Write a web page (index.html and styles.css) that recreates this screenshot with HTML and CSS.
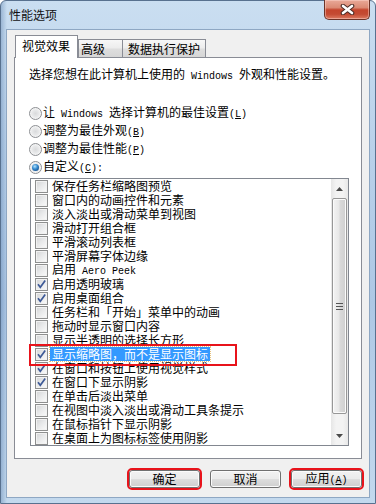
FILE: index.html
```html
<!DOCTYPE html>
<html lang="zh-CN">
<head>
<meta charset="utf-8">
<title>性能选项</title>
<link rel="stylesheet" href="styles.css">
</head>
<body>
<div class="window">
  <div class="titlebar">
    <span class="title">性能选项</span>
    <div class="close">
      <svg width="15" height="11" viewBox="0 0 15 11"><path d="M3 2 L12 9 M12 2 L3 9" stroke="#4b2b25" stroke-width="4.6" stroke-linecap="round"/><path d="M3 2 L12 9 M12 2 L3 9" stroke="#fff" stroke-width="2.6" stroke-linecap="round"/></svg>
    </div>
  </div>
  <div class="client">
    <div class="tabs">
      <div class="tab active">视觉效果</div>
      <div class="tab t-adv">高级</div>
      <div class="tab t-dep">数据执行保护</div>
    </div>
    <div class="panel">
      <p class="intro">选择您想在此计算机上使用的<span class="en"> Windows </span>外观和性能设置。</p>
      <div class="radios">
        <div class="radio-row"><span class="radio"></span><span class="lbl">让<span class="en"> Windows </span>选择计算机的最佳设置<span class="en">(<u>L</u>)</span></span></div>
        <div class="radio-row"><span class="radio"></span><span class="lbl">调整为最佳外观<span class="en">(<u>B</u>)</span></span></div>
        <div class="radio-row"><span class="radio"></span><span class="lbl">调整为最佳性能<span class="en">(<u>P</u>)</span></span></div>
        <div class="radio-row"><span class="radio on"></span><span class="lbl">自定义<span class="en">(<u>C</u>):</span></span></div>
      </div>
      <div class="listbox">
        <ul class="items">
          <li><span class="cb"></span><span class="lbl">保存任务栏缩略图预览</span></li>
          <li><span class="cb"></span><span class="lbl">窗口内的动画控件和元素</span></li>
          <li><span class="cb"></span><span class="lbl">淡入淡出或滑动菜单到视图</span></li>
          <li><span class="cb"></span><span class="lbl">滑动打开组合框</span></li>
          <li><span class="cb"></span><span class="lbl">平滑滚动列表框</span></li>
          <li><span class="cb"></span><span class="lbl">平滑屏幕字体边缘</span></li>
          <li><span class="cb"></span><span class="lbl">启用<span class="en"> Aero Peek</span></span></li>
          <li><span class="cb checked"><svg width="11" height="11" viewBox="0 0 11 11"><path d="M2 5.2 L4.3 8.3 L9.2 1.6" fill="none" stroke="#3e5a97" stroke-width="1.7"/></svg></span><span class="lbl">启用透明玻璃</span></li>
          <li><span class="cb checked"><svg width="11" height="11" viewBox="0 0 11 11"><path d="M2 5.2 L4.3 8.3 L9.2 1.6" fill="none" stroke="#3e5a97" stroke-width="1.7"/></svg></span><span class="lbl">启用桌面组合</span></li>
          <li><span class="cb"></span><span class="lbl">任务栏和「开始」菜单中的动画</span></li>
          <li><span class="cb"></span><span class="lbl">拖动时显示窗口内容</span></li>
          <li><span class="cb"></span><span class="lbl">显示半透明的选择长方形</span></li>
          <li class="marked"><span class="cb checked"><svg width="11" height="11" viewBox="0 0 11 11"><path d="M2 5.2 L4.3 8.3 L9.2 1.6" fill="none" stroke="#3e5a97" stroke-width="1.7"/></svg></span><span class="sel">显示缩略图，而不是显示图标</span><span class="redbox"></span></li>
          <li><span class="cb checked"><svg width="11" height="11" viewBox="0 0 11 11"><path d="M2 5.2 L4.3 8.3 L9.2 1.6" fill="none" stroke="#3e5a97" stroke-width="1.7"/></svg></span><span class="lbl">在窗口和按钮上使用视觉样式</span></li>
          <li><span class="cb checked"><svg width="11" height="11" viewBox="0 0 11 11"><path d="M2 5.2 L4.3 8.3 L9.2 1.6" fill="none" stroke="#3e5a97" stroke-width="1.7"/></svg></span><span class="lbl">在窗口下显示阴影</span></li>
          <li><span class="cb"></span><span class="lbl">在单击后淡出菜单</span></li>
          <li><span class="cb"></span><span class="lbl">在视图中淡入淡出或滑动工具条提示</span></li>
          <li><span class="cb"></span><span class="lbl">在鼠标指针下显示阴影</span></li>
          <li><span class="cb"></span><span class="lbl">在桌面上为图标标签使用阴影</span></li>
        </ul>
        <div class="scrollbar">
          <div class="sb-btn"><svg width="7" height="4" viewBox="0 0 7 4"><polygon points="0,4 3.5,0 7,4" fill="#4a4a4a"/></svg></div>
          <div class="sb-thumb"><span class="grip"></span></div>
          <div class="sb-track"></div>
          <div class="sb-btn"><svg width="7" height="4" viewBox="0 0 7 4"><polygon points="0,0 7,0 3.5,4" fill="#4a4a4a"/></svg></div>
        </div>
      </div>
    </div>
    <div class="buttons">
      <button class="btn marked-btn">确定</button>
      <button class="btn">取消</button>
      <button class="btn marked-btn"><span class="lbl">应用<span class="en">(<u>A</u>)</span></span></button>
    </div>
  </div>
</div>
</body>
</html>
```
FILE: styles.css
```css
* { box-sizing: border-box; margin: 0; padding: 0; }
html, body { width: 376px; height: 504px; overflow: hidden; }
body {
  font: 12px/14px "Noto Sans CJK SC", "Noto Sans", sans-serif;
  color: #000;
  background: #fff;
}
.en { font-family: "Liberation Mono", "DejaVu Sans Mono", monospace; font-size: 10px; }
.lbl { white-space: pre; }

.window {
  width: 376px;
  height: 504px;
  display: flex;
  flex-direction: column;
  border: 1px solid #58718f;
  border-radius: 6px 6px 0 0;
  background:
    linear-gradient(90deg, rgba(70,110,160,.35), rgba(70,110,160,0) 6px),
    linear-gradient(180deg, #cadef1 0%, #b9d1ea 30%, #aec8e5 60%, #c3d9ee 100%);
}

.titlebar {
  height: 28px;
  flex: none;
  display: flex;
  align-items: center;
  justify-content: space-between;
  padding-left: 8px;
}
.title { font-size: 12px; line-height: 14px; color: #111; }
.close {
  align-self: flex-start;
  margin-top: -1px;
  margin-right: 5px;
  width: 46px;
  height: 20px;
  display: flex;
  align-items: center;
  justify-content: center;
  border: 1px solid #6b3328;
  border-top: none;
  border-radius: 0 0 5px 5px;
  background: linear-gradient(180deg, #e9a998 0%, #db8a74 40%, #c4452d 52%, #c44b33 75%, #dd7b62 100%);
  box-shadow: inset 0 0 0 1px rgba(255,220,210,.45);
}

.client {
  flex: 1;
  margin: 0 5px 5px;
  border: 1px solid #8ea7c3;
  background: #f0f0f0;
  display: flex;
  flex-direction: column;
  padding: 5px 7px 9px 7px;
}

.tabs {
  height: 23px;
  flex: none;
  display: flex;
  align-items: flex-end;
  padding-left: 1px;
}
.tab {
  height: 18px;
  margin-bottom: 1px;
  border: 1px solid #898c95;
  border-bottom: none;
  background: linear-gradient(180deg, #f7f7f7 0%, #ececec 48%, #dedede 52%, #d6d6d6 100%);
  padding-top: 2px;
  white-space: nowrap;
}
.tab.active {
  position: relative;
  z-index: 2;
  height: 23px;
  margin-bottom: 0;
  width: 63px;
  padding: 3px 0 0 6px;
  background: #fff;
}
.t-adv { width: 45px; padding-left: 2px; }
.t-dep { width: 83px; padding-left: 5px; border-left: none; }

.panel {
  height: 402px;
  flex: none;
  margin-top: -1px;
  border: 1px solid #898c95;
  background: #fff;
  padding: 9px 11px 0 14px;
}
.intro { height: 14px; margin-bottom: 23px; white-space: pre; }

.radios { display: flex; flex-direction: column; }
.radio-row {
  height: 18px;
  display: flex;
  align-items: center;
}
.radio {
  width: 13px;
  height: 13px;
  margin-right: 1px;
  flex: none;
  border-radius: 50%;
  border: 1px solid #8d8f93;
  background: radial-gradient(circle at 50% 50%, #d9dadc 0, #e8e9ea 45%, #f8f8f8 75%, #fff 100%);
  display: flex;
  align-items: center;
  justify-content: center;
}
.radio.on::after {
  content: "";
  width: 7px;
  height: 7px;
  border-radius: 50%;
  background: radial-gradient(circle at 40% 35%, #b6e3fb 0, #3a8fd3 40%, #134f8e 80%, #0d3a6b 100%);
}

.listbox {
  margin: 2px 0 0 1px;
  width: 319px;
  height: 268px;
  border: 1px solid #828790;
  display: flex;
  background: #fff;
}
.items { list-style: none; flex: 1; }
.items li {
  position: relative;
  height: 14px;
  display: flex;
  align-items: center;
  padding-left: 4px;
}
.cb {
  width: 13px;
  height: 13px;
  margin-right: 4px;
  flex: none;
  border: 1px solid #8e8f8f;
  background: linear-gradient(135deg, #d2d3d5 0%, #e9eaeb 50%, #fbfbfb 100%);
  box-shadow: inset 0 0 0 1px #f2f2f2;
  display: flex;
  align-items: center;
  justify-content: center;
}
.cb svg { display: block; }
.sel {
  margin-left: -2px;
  padding: 0 2px;
  height: 14px;
  line-height: 14px;
  white-space: pre;
  background: #3399ff;
  color: #fff;
  outline: 1px dotted #e7c27d;
  outline-offset: 0;
}
.redbox {
  position: absolute;
  left: -2px;
  top: -3px;
  width: 208px;
  height: 22px;
  border: 2px solid #e8131b;
  z-index: 3;
}

.scrollbar {
  width: 17px;
  flex: none;
  display: flex;
  flex-direction: column;
  background: linear-gradient(90deg, #e6e6e6 0%, #f3f3f3 30%, #f3f3f3 70%, #e8e8e8 100%);
}
.sb-btn {
  height: 19px;
  flex: none;
  display: flex;
  align-items: center;
  justify-content: center;
}
.sb-btn:last-child { height: 18px; }
.sb-thumb {
  height: 216px;
  flex: none;
  margin: 0 1px;
  border: 1px solid #979797;
  border-radius: 2px;
  background: linear-gradient(90deg, #f3f3f3 0%, #e8e8e8 45%, #d9d9d9 55%, #cfcfcf 100%);
  box-shadow: inset 0 0 0 1px #fbfbfb;
  display: flex;
  align-items: center;
  justify-content: center;
}
.grip {
  width: 7px;
  height: 7px;
  background: repeating-linear-gradient(180deg, #555 0 1px, transparent 1px 3px);
}
.sb-track { flex: 1; }

.buttons {
  margin-top: 11px;
  height: 18px;
  display: flex;
  justify-content: flex-end;
  gap: 10px;
}
.btn {
  width: 71px;
  height: 18px;
  font: 12px/14px "Noto Sans CJK SC", "Noto Sans", sans-serif;
  color: #000;
  border: 1px solid #707070;
  border-radius: 3px;
  background: linear-gradient(180deg, #f2f2f2 0%, #ebebeb 48%, #dddddd 52%, #cfcfcf 100%);
  box-shadow: inset 0 0 0 1px #fbfbfb;
  display: flex;
  align-items: center;
  justify-content: center;
}
.marked-btn { outline: 2px solid #e8131b; outline-offset: 0; }
```
